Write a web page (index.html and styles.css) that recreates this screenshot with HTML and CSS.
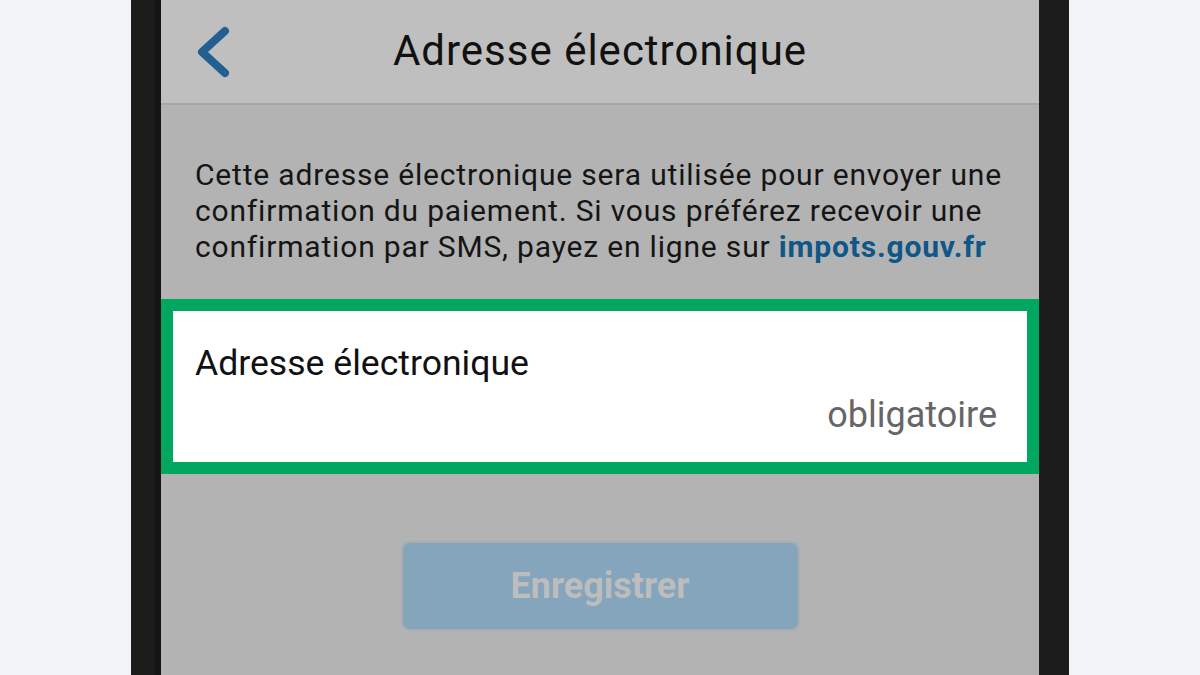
FILE: index.html
```html
<!DOCTYPE html>
<html lang="fr">
<head>
<meta charset="utf-8">
<title>Adresse électronique</title>
<link rel="stylesheet" href="styles.css">
</head>
<body>
<div class="stage">
  <div class="phone">
    <div class="screen">
      <header class="topbar">
        <button class="back" aria-label="Retour">
          <svg width="40" height="60" viewBox="0 0 40 60"><polyline points="29,10 6,31 29,52" fill="none" stroke="#245f92" stroke-width="8" stroke-linecap="round" stroke-linejoin="round"/></svg>
        </button>
        <h1 class="title">Adresse électronique</h1>
      </header>
      <main class="content">
        <p class="intro">Cette adresse électronique sera utilisée pour envoyer une confirmation du paiement. Si vous préférez recevoir une confirmation par SMS, payez en ligne sur <a class="link" href="#">impots.gouv.fr</a></p>
        <div class="field">
          <div class="field-label">Adresse électronique</div>
          <div class="field-hint">obligatoire</div>
        </div>
        <div class="actions">
          <button class="save">Enregistrer</button>
        </div>
      </main>
    </div>
  </div>
</div>
</body>
</html>
```
FILE: styles.css
```css
html, body {
  margin: 0;
  padding: 0;
  height: 100%;
}
body {
  background: #f2f4f9;
  font-family: Roboto, "Noto Sans", "Liberation Sans", sans-serif;
  overflow: hidden;
}
.stage {
  display: flex;
  justify-content: center;
  height: 675px;
}
.phone {
  width: 878px;
  padding: 0 30px;
  background: #1c1c1c;
  display: flex;
}
.screen {
  flex: 1;
  display: flex;
  flex-direction: column;
  background: #b3b3b3;
  box-shadow: -6px 0 0 #141414;
}
.topbar {
  height: 103px;
  background: #bfbfbf;
  border-bottom: 2px solid #a6a6a6;
  display: flex;
  align-items: center;
  justify-content: center;
  position: relative;
}
.back {
  position: absolute;
  left: 35px;
  top: 21px;
  padding: 0;
  border: 0;
  background: none;
  width: 40px;
  height: 60px;
}
.back svg { display: block; }
.title {
  margin: 0;
  font-weight: 400;
  font-size: 42px;
  letter-spacing: 1px;
  color: #111;
  padding-bottom: 2px;
}
.content {
  flex: 1;
  display: flex;
  flex-direction: column;
}
.intro {
  margin: 0;
  padding: 52px 20px 34px 34px;
  font-size: 30px;
  letter-spacing: 0.82px;
  line-height: 36px;
  color: #151515;
}
.link {
  color: #0f5689;
  font-weight: 700;
  text-decoration: none;
}
.field {
  border: 12px solid #00a85f;
  background: #fff;
  height: 151px;
  box-sizing: content-box;
  padding: 0 30px 0 22px;
  display: flex;
  flex-direction: column;
}
.field-label {
  font-size: 35.6px;
  line-height: 42px;
  color: #111;
  margin-top: 31px;
}
.field-hint {
  font-size: 36px;
  line-height: 42px;
  color: #666;
  text-align: right;
  margin-top: 10px;
}
.actions {
  display: flex;
  justify-content: center;
  padding-top: 67px;
}
.save {
  width: 399px;
  height: 90px;
  border: 2px solid #a9adb0;
  border-radius: 9px;
  background: #84a5bb;
  color: #bdbdbd;
  font-family: Roboto, "Noto Sans", "Liberation Sans", sans-serif;
  font-size: 36px;
  font-weight: 700;
  padding: 0;
}
```
